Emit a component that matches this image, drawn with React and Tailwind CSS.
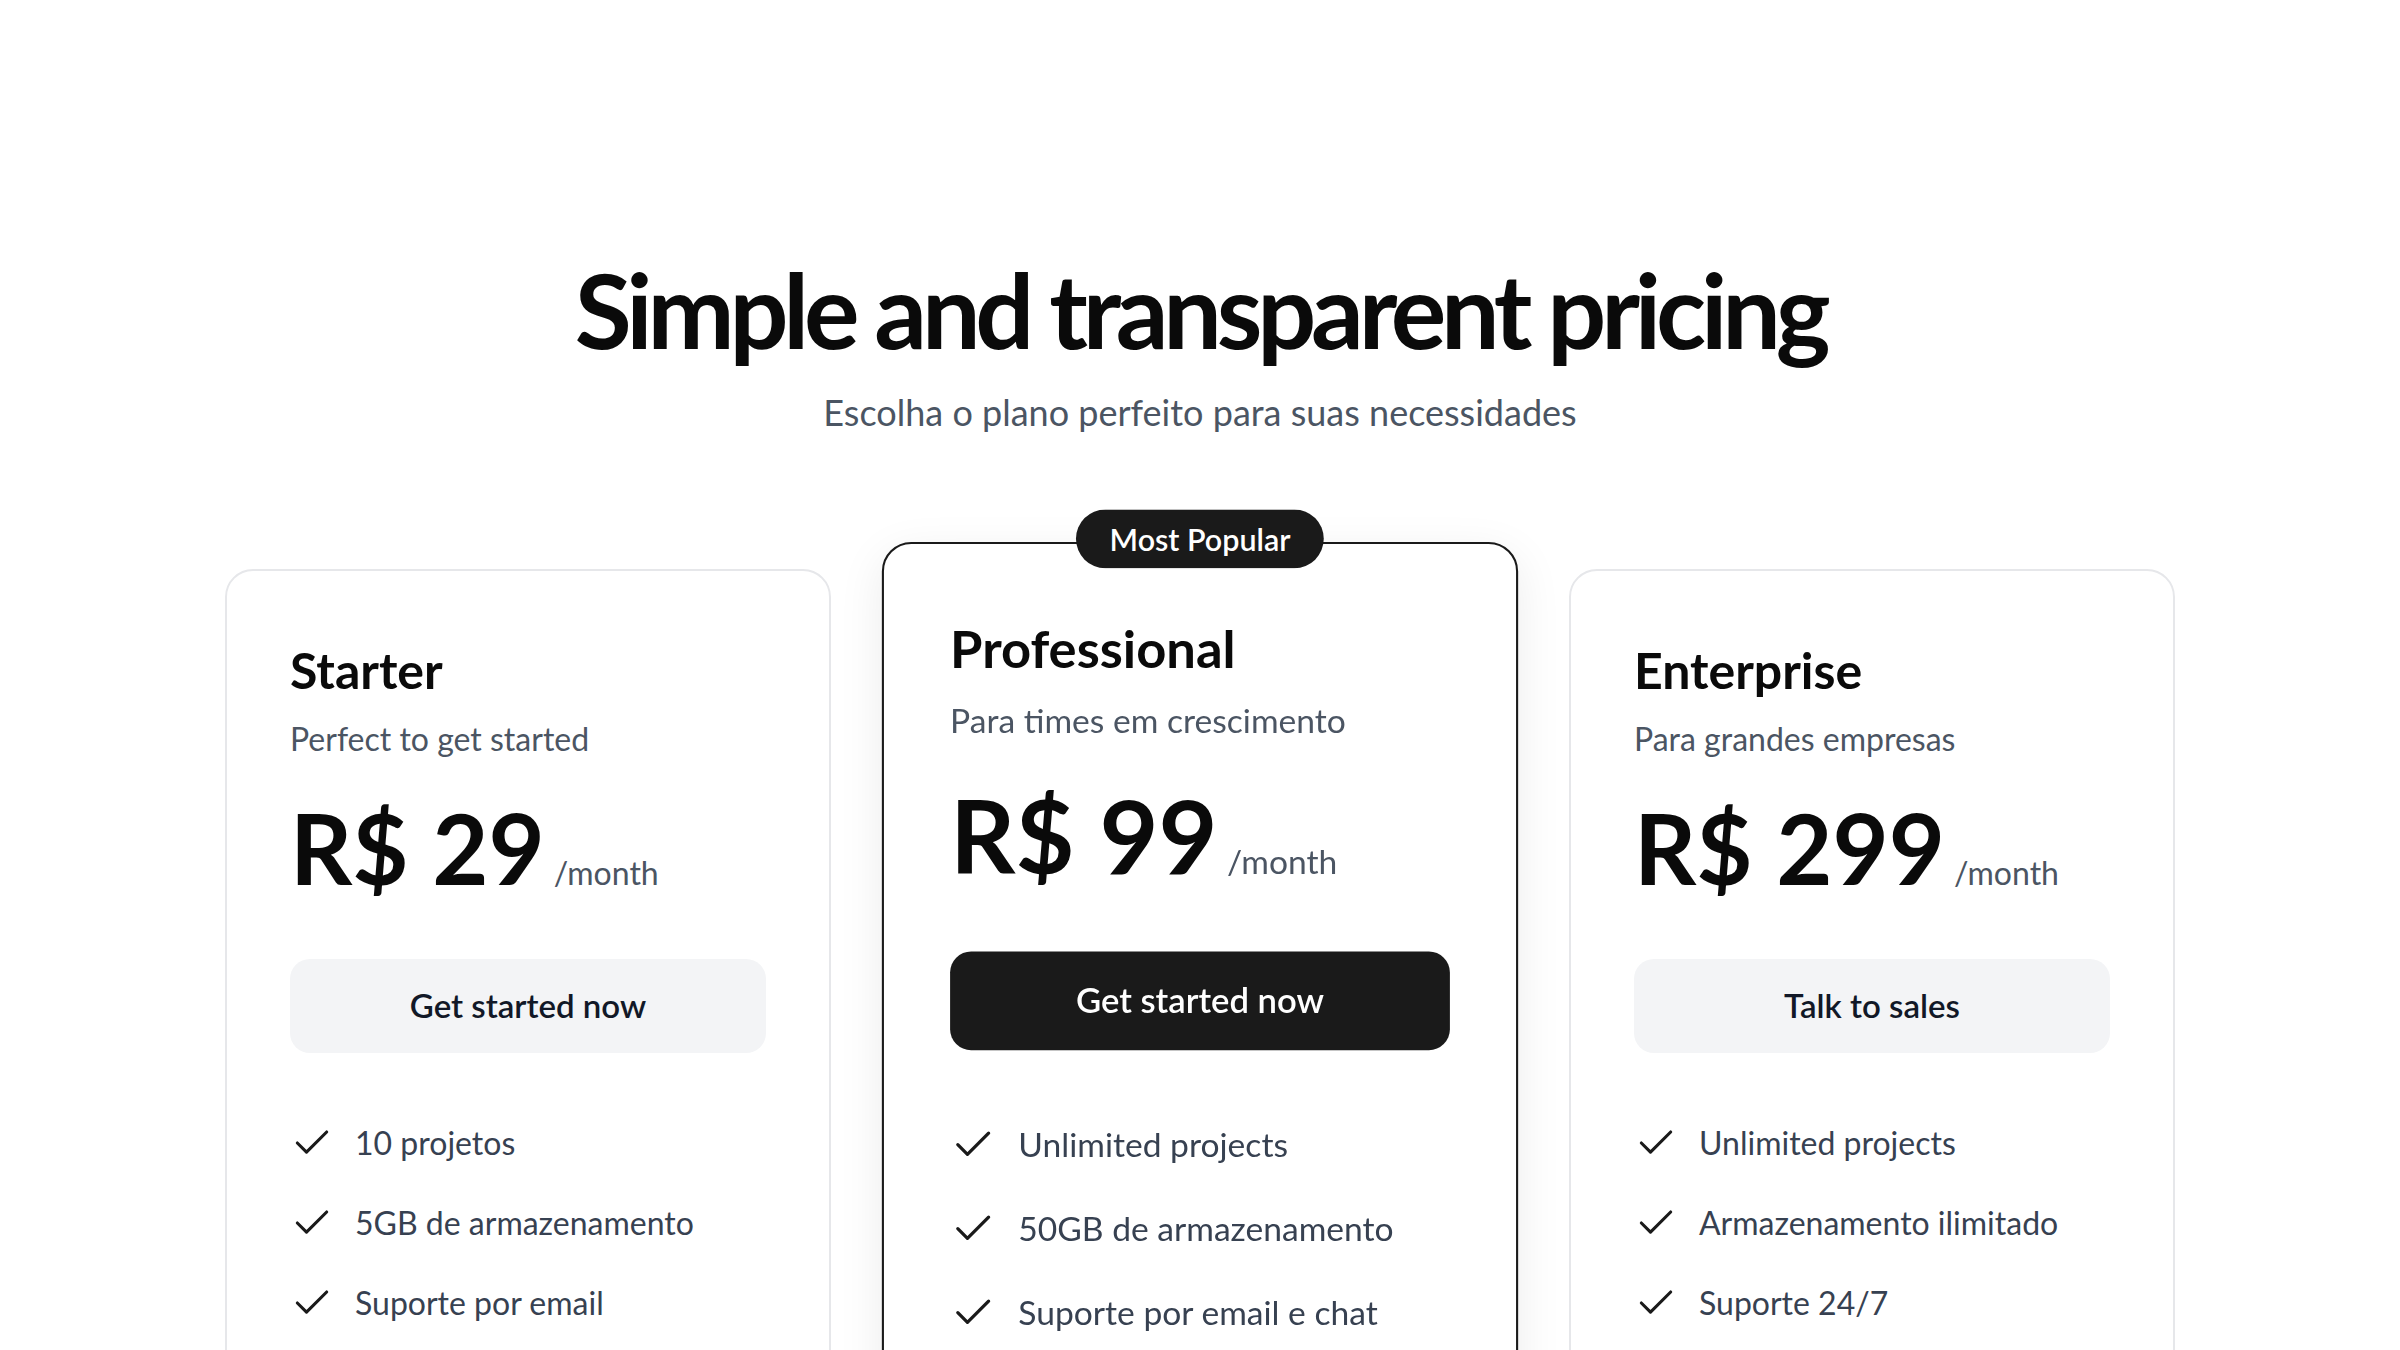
import React from 'react';
import { Check } from 'lucide-react';

const PLANOS = [
    {
        nome: 'Starter',
        descricao: 'Perfect to get started',
        preco: 'R$ 29',
        cta: 'Get started now',
        destaque: false,
        recursos: ['10 projetos', '5GB de armazenamento', 'Suporte por email'],
    },
    {
        nome: 'Professional',
        descricao: 'Para times em crescimento',
        preco: 'R$ 99',
        cta: 'Get started now',
        destaque: true,
        recursos: ['Unlimited projects', '50GB de armazenamento', 'Suporte por email e chat'],
    },
    {
        nome: 'Enterprise',
        descricao: 'Para grandes empresas',
        preco: 'R$ 299',
        cta: 'Talk to sales',
        destaque: false,
        recursos: ['Unlimited projects', 'Armazenamento ilimitado', 'Suporte 24/7'],
    },
];

const PlanoCard = ({ plano }) => {
    const { destaque } = plano;
    return (
        <div
            className={`relative min-h-[1080px] rounded-[28px] border-2 bg-white px-[63px] pt-[74px] pb-[64px] flex flex-col ${
                destaque
                    ? 'scale-105 border-[#1a1a1a] shadow-[0_12px_44px_rgba(0,0,0,0.08)] z-10'
                    : 'border-[#e6e7ea]'
            }`}
        >
            {destaque && (
                <div className="absolute -top-[33px] left-1/2 -translate-x-1/2 h-[56px] px-[32px] rounded-full bg-[#1a1a1a] text-white text-[29px] font-semibold leading-none flex items-center whitespace-nowrap">
                    Most Popular
                </div>
            )}

            {/* Cabeçalho do plano */}
            <h3 className="text-[50px] font-bold leading-none text-[#0a0a0a]">{plano.nome}</h3>
            <p className="mt-[28px] text-[32px] leading-none text-[#4b5563]">{plano.descricao}</p>

            <div className="mt-[44px] flex items-baseline gap-[9px]">
                <span className="text-[97px] font-bold leading-none text-[#0a0a0a]">{plano.preco}</span>
                <span className="text-[32px] leading-none text-[#4b5563]">/month</span>
            </div>

            <button
                className={`mt-[63px] h-[94px] w-full rounded-[20px] text-[33px] font-semibold ${
                    destaque ? 'bg-[#1a1a1a] text-white' : 'bg-[#f3f4f6] text-[#111827]'
                }`}
            >
                {plano.cta}
            </button>

            {/* Recursos */}
            <ul className="mt-[68px] flex flex-col gap-[36px]">
                {plano.recursos.map((r) => (
                    <li key={r} className="flex items-center gap-[21px]">
                        <Check size={44} strokeWidth={1.7} className="text-[#1a1a1a] shrink-0" />
                        <span className="text-[32px] leading-none text-[#374151]">{r}</span>
                    </li>
                ))}
            </ul>
        </div>
    );
};

const App = () => {
    return (
        <div className="min-h-screen bg-white font-[Lato,sans-serif] overflow-hidden h-[1350px]">
            <section className="pt-[257px] flex flex-col items-center">
                <h1 className="text-[104px] font-bold leading-none tracking-[-0.05em] text-[#0a0a0a]">
                    Simple and transparent pricing
                </h1>
                <p className="mt-[33px] text-[36px] leading-none text-[#4b5563]">
                    Escolha o plano perfeito para suas necessidades
                </p>

                <div className="mt-[139px] w-[1950px] grid grid-cols-3 gap-[66px] items-start">
                    {PLANOS.map((p) => (
                        <PlanoCard key={p.nome} plano={p} />
                    ))}
                </div>
            </section>
        </div>
    );
};

export default App;
